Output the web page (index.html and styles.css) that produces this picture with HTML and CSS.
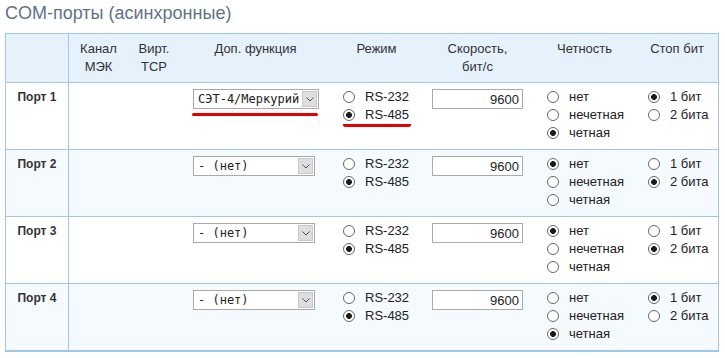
FILE: index.html
```html
<!DOCTYPE html>
<html lang="ru">
<head>
    <meta charset="UTF-8">
    <meta name="viewport" content="width=device-width, initial-scale=1.0">
    <title>COM-порты</title>
    <link rel="stylesheet" href="styles.css">
</head>
<body>
    <h1 class="title">COM-порты (асинхронные)</h1>

    <table class="ports">
        <colgroup>
            <col class="w-port">
            <col class="w-iec">
            <col class="w-tcp">
            <col class="w-func">
            <col class="w-mode">
            <col class="w-speed">
            <col class="w-parity">
            <col class="w-stop">
        </colgroup>
        <thead>
            <tr>
                <th class="port"></th>
                <th>Канал<br>МЭК</th>
                <th>Вирт.<br>TCP</th>
                <th>Доп. функция</th>
                <th>Режим</th>
                <th>Скорость,<br>бит/с</th>
                <th>Четность</th>
                <th>Стоп бит</th>
            </tr>
        </thead>
        <tbody>
            <!-- Порт 1 -->
            <tr>
                <td class="port">Порт 1</td>
                <td></td>
                <td></td>
                <td class="func">
                    <div class="pick pick-wide">
                        <div class="select">
                            <select><option>СЭТ-4/Меркурий</option></select>
                            <span class="arrow"><svg width="8" height="5" viewBox="0 0 8 5"><path d="M0.5 0.5 L4 4 L7.5 0.5" fill="none" stroke="#555" stroke-width="1"/></svg></span>
                        </div>
                        <div class="redline"></div>
                    </div>
                </td>
                <td class="mode">
                    <label class="opt"><input type="radio" name="mode1"> RS-232</label>
                    <label class="opt marked"><input type="radio" name="mode1" checked> RS-485</label>
                </td>
                <td class="speed"><input class="num" type="text" value="9600"></td>
                <td class="parity">
                    <label class="opt"><input type="radio" name="par1"> нет</label>
                    <label class="opt"><input type="radio" name="par1"> нечетная</label>
                    <label class="opt"><input type="radio" name="par1" checked> четная</label>
                </td>
                <td class="stop">
                    <label class="opt"><input type="radio" name="stop1" checked> 1 бит</label>
                    <label class="opt"><input type="radio" name="stop1"> 2 бита</label>
                </td>
            </tr>
            <!-- Порт 2 -->
            <tr>
                <td class="port">Порт 2</td>
                <td></td>
                <td></td>
                <td class="func">
                    <div class="pick">
                        <div class="select">
                            <select><option>- (нет)</option></select>
                            <span class="arrow"><svg width="8" height="5" viewBox="0 0 8 5"><path d="M0.5 0.5 L4 4 L7.5 0.5" fill="none" stroke="#555" stroke-width="1"/></svg></span>
                        </div>
                    </div>
                </td>
                <td class="mode">
                    <label class="opt"><input type="radio" name="mode2"> RS-232</label>
                    <label class="opt"><input type="radio" name="mode2" checked> RS-485</label>
                </td>
                <td class="speed"><input class="num" type="text" value="9600"></td>
                <td class="parity">
                    <label class="opt"><input type="radio" name="par2" checked> нет</label>
                    <label class="opt"><input type="radio" name="par2"> нечетная</label>
                    <label class="opt"><input type="radio" name="par2"> четная</label>
                </td>
                <td class="stop">
                    <label class="opt"><input type="radio" name="stop2"> 1 бит</label>
                    <label class="opt"><input type="radio" name="stop2" checked> 2 бита</label>
                </td>
            </tr>
            <!-- Порт 3 -->
            <tr>
                <td class="port">Порт 3</td>
                <td></td>
                <td></td>
                <td class="func">
                    <div class="pick">
                        <div class="select">
                            <select><option>- (нет)</option></select>
                            <span class="arrow"><svg width="8" height="5" viewBox="0 0 8 5"><path d="M0.5 0.5 L4 4 L7.5 0.5" fill="none" stroke="#555" stroke-width="1"/></svg></span>
                        </div>
                    </div>
                </td>
                <td class="mode">
                    <label class="opt"><input type="radio" name="mode3"> RS-232</label>
                    <label class="opt"><input type="radio" name="mode3" checked> RS-485</label>
                </td>
                <td class="speed"><input class="num" type="text" value="9600"></td>
                <td class="parity">
                    <label class="opt"><input type="radio" name="par3" checked> нет</label>
                    <label class="opt"><input type="radio" name="par3"> нечетная</label>
                    <label class="opt"><input type="radio" name="par3"> четная</label>
                </td>
                <td class="stop">
                    <label class="opt"><input type="radio" name="stop3"> 1 бит</label>
                    <label class="opt"><input type="radio" name="stop3" checked> 2 бита</label>
                </td>
            </tr>
            <!-- Порт 4 -->
            <tr>
                <td class="port">Порт 4</td>
                <td></td>
                <td></td>
                <td class="func">
                    <div class="pick">
                        <div class="select">
                            <select><option>- (нет)</option></select>
                            <span class="arrow"><svg width="8" height="5" viewBox="0 0 8 5"><path d="M0.5 0.5 L4 4 L7.5 0.5" fill="none" stroke="#555" stroke-width="1"/></svg></span>
                        </div>
                    </div>
                </td>
                <td class="mode">
                    <label class="opt"><input type="radio" name="mode4"> RS-232</label>
                    <label class="opt"><input type="radio" name="mode4" checked> RS-485</label>
                </td>
                <td class="speed"><input class="num" type="text" value="9600"></td>
                <td class="parity">
                    <label class="opt"><input type="radio" name="par4"> нет</label>
                    <label class="opt"><input type="radio" name="par4"> нечетная</label>
                    <label class="opt"><input type="radio" name="par4" checked> четная</label>
                </td>
                <td class="stop">
                    <label class="opt"><input type="radio" name="stop4" checked> 1 бит</label>
                    <label class="opt"><input type="radio" name="stop4"> 2 бита</label>
                </td>
            </tr>
        </tbody>
    </table>
</body>
</html>
```

FILE: styles.css
```css
body {
    font-family: "Liberation Sans", Arial, sans-serif;
    font-size: 13px;
    color: #333;
    background: #fff;
    margin: 0;
    padding: 2px 5px 0;
}
.title {
    font-size: 18px;
    font-weight: normal;
    line-height: 22px;
    color: #5f7385;
    margin: 0 0 9px;
}

/* table */
.ports {
    width: 714px;
    table-layout: fixed;
    border-collapse: separate;
    border-spacing: 0;
    border: 1px solid #9dc8ea;
    border-bottom-width: 2px;
}
.w-port { width: 63px; }
.w-iec { width: 59px; }
.w-tcp { width: 52px; }
.w-func { width: 151px; }
.w-mode { width: 91px; }
.w-speed { width: 111px; }
.w-parity { width: 103px; }
.w-stop { width: 82px; }

th {
    background: #e5f1fb;
    font-weight: normal;
    color: #333;
    line-height: 18px;
    padding: 6px 2px;
    text-align: center;
    vertical-align: top;
}
td {
    border-top: 1px solid #9dc8ea;
    line-height: 18px;
    padding: 5px 4px 7px;
    vertical-align: top;
    height: 54px;
}
tbody tr:nth-child(even) td {
    background: #f5faff;
}
.port {
    border-right: 1px solid #9dc8ea;
}
td.port {
    text-align: center;
    font-weight: bold;
    font-size: 12px;
    color: #333;
}
td.func { padding-left: 13px; }
td.mode { padding-left: 12px; }
td.speed { padding-left: 10px; }
td.parity { padding-left: 14px; }
td.stop { padding-left: 12px; }

/* select */
.pick {
    display: inline-block;
    width: 122px;
    margin-top: 1px;
}
.pick-wide { width: 126px; }
.select {
    display: flex;
    height: 20px;
    box-sizing: border-box;
    border: 1px solid #a9a9a9;
    background: #fff;
}
.select select {
    appearance: none;
    -webkit-appearance: none;
    flex: 1;
    min-width: 0;
    border: none;
    outline: none;
    background: #fff;
    font-family: "DejaVu Sans Mono", monospace;
    font-size: 12px;
    color: #222;
    padding: 0 0 0 4px;
    margin: 0;
    height: 18px;
}
.arrow {
    width: 15px;
    margin: 1px;
    background: #dedede;
    border: 1px solid #c9c9c9;
    box-sizing: border-box;
    display: flex;
    align-items: center;
    justify-content: center;
}
.redline {
    height: 3px;
    margin: 4px 1px 0 -1px;
    background: #e60000;
    border-radius: 2px;
}

/* radios */
.opt {
    display: flex;
    align-items: center;
    gap: 10px;
    height: 18px;
    color: #222;
    white-space: nowrap;
}
.opt input {
    appearance: none;
    -webkit-appearance: none;
    width: 12px;
    height: 12px;
    margin: 0;
    border: 1px solid #666;
    border-radius: 50%;
    background: #fff;
    flex: none;
}
.opt input:checked {
    background: radial-gradient(circle, #1a1a1a 0 2.6px, #fff 3.2px);
}
.mode .marked {
    display: inline-flex;
    border-bottom: 3px solid #e60000;
    border-radius: 2px;
    padding-right: 2px;
}

/* speed input */
.num {
    width: 91px;
    height: 20px;
    box-sizing: border-box;
    margin: 1px 0 0;
    border: 1px solid #aaa;
    padding: 0 3px;
    text-align: right;
    font-family: "Liberation Sans", Arial, sans-serif;
    font-size: 13px;
    color: #222;
}
```
